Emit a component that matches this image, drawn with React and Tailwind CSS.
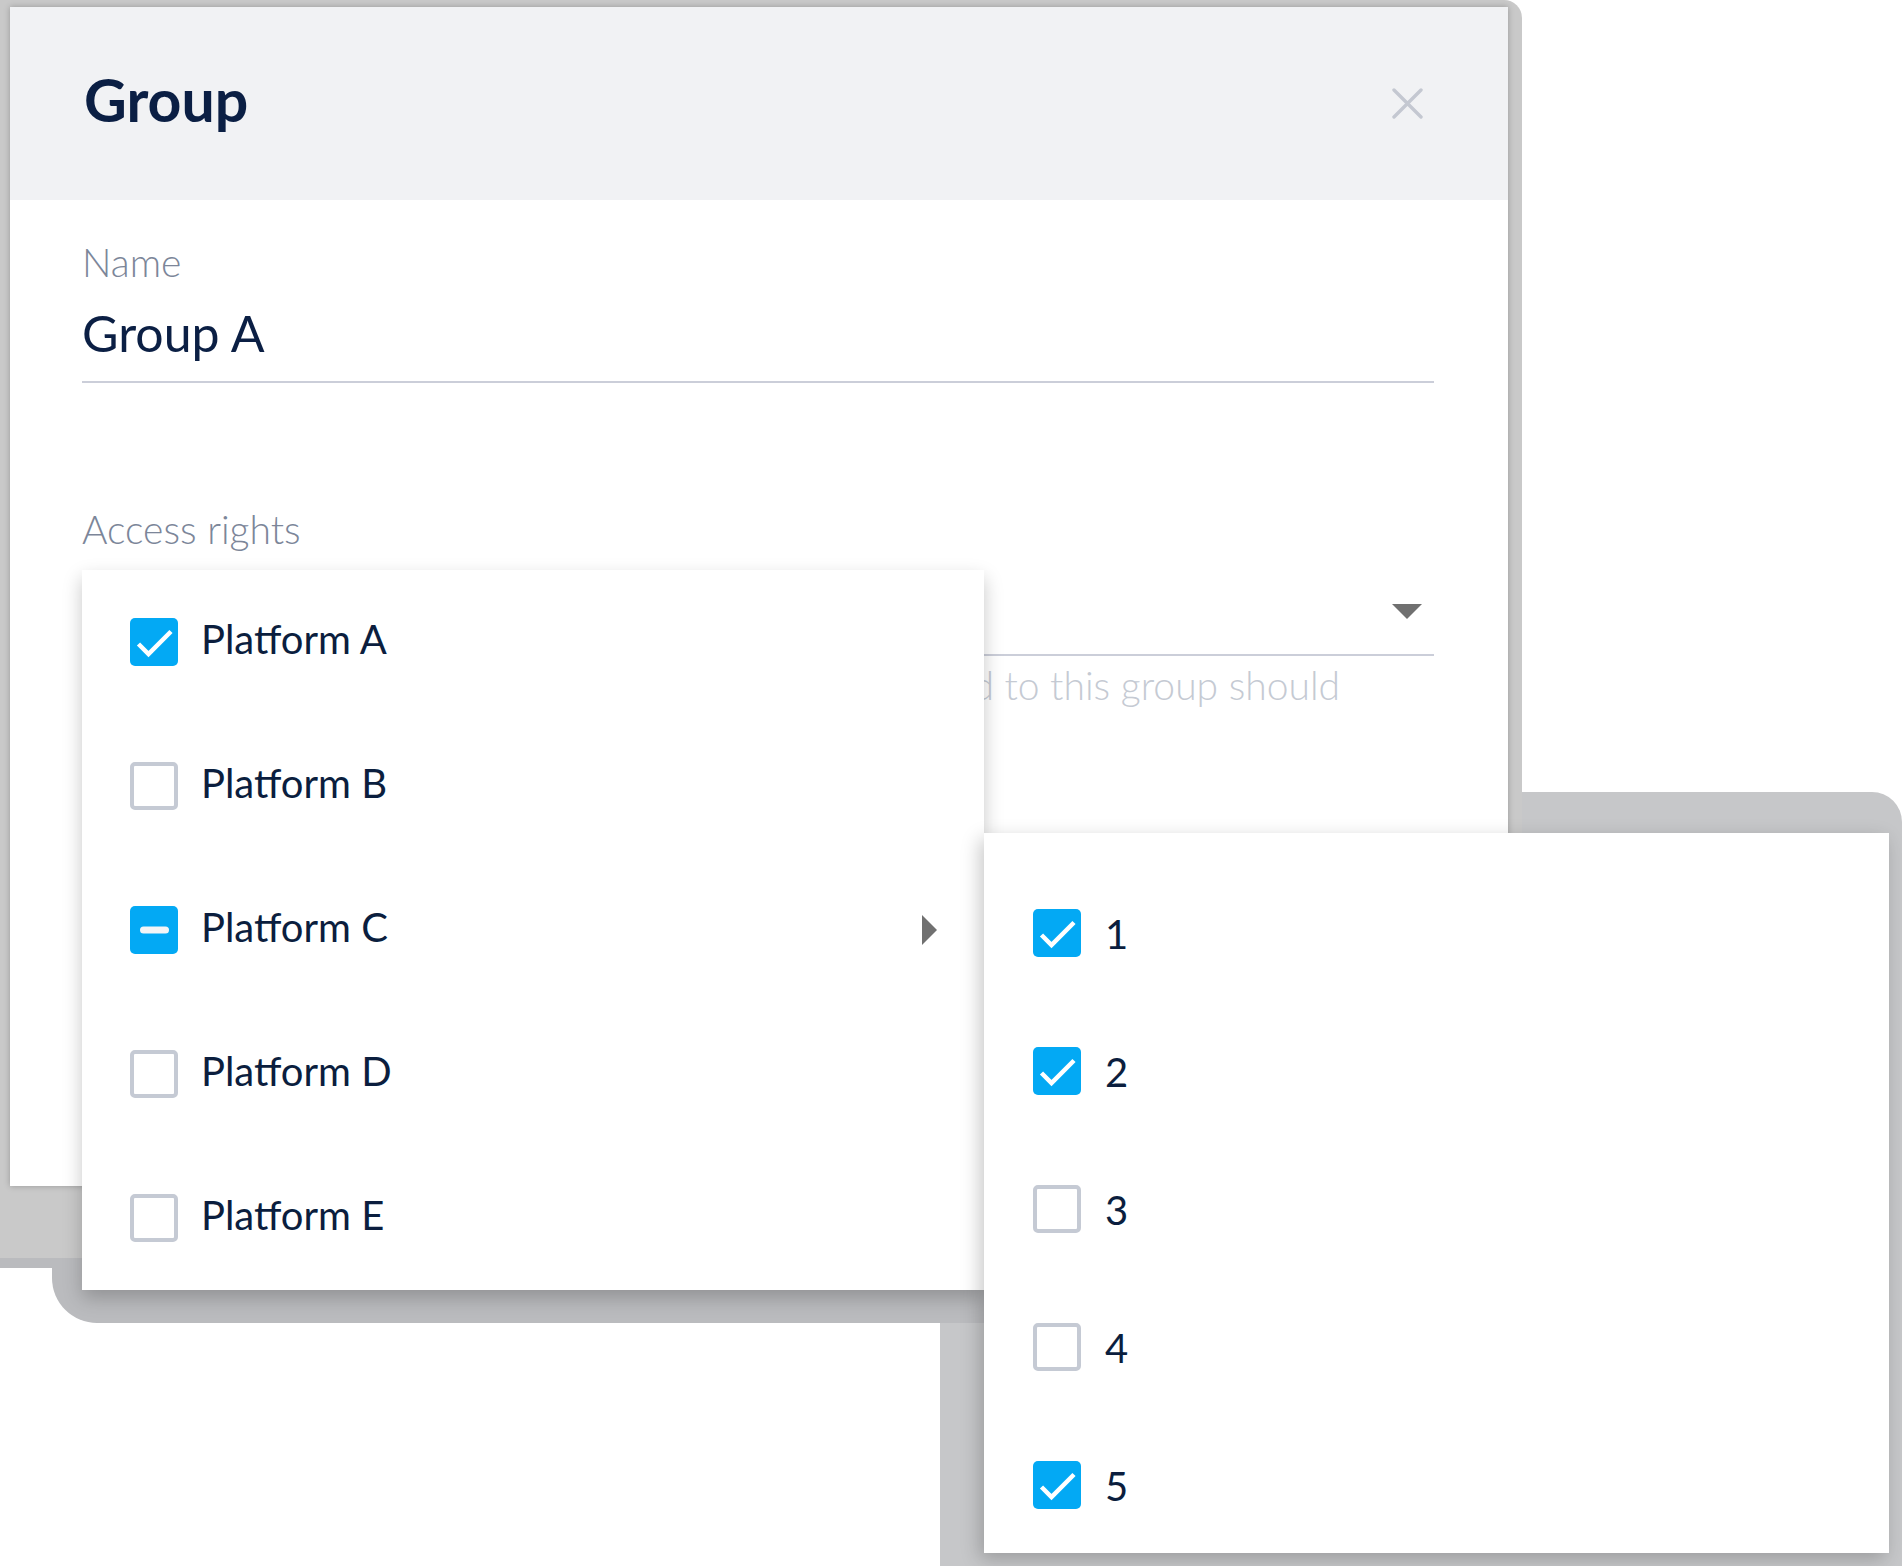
import React from "react"

const platforms = [
    { label: "Platform A", state: "checked" },
    { label: "Platform B", state: "unchecked" },
    { label: "Platform C", state: "indeterminate", hasChildren: true },
    { label: "Platform D", state: "unchecked" },
    { label: "Platform E", state: "unchecked" },
]

const sites = [
    { label: "1", state: "checked" },
    { label: "2", state: "checked" },
    { label: "3", state: "unchecked" },
    { label: "4", state: "unchecked" },
    { label: "5", state: "checked" },
]

function Checkbox({ state }) {
    if (state === "unchecked") {
        return <div className="h-[48px] w-[48px] shrink-0 rounded-[5px] border-[4px] border-[#c5cad4] bg-white" />
    }
    return (
        <div className="flex h-[48px] w-[48px] shrink-0 items-center justify-center rounded-[5px] bg-[#03a9f4]">
            {state === "checked" ? (
                <svg width="48" height="48" viewBox="0 0 48 48">
                    <path d="M8.5 26 L18.5 36 L41 13.5" fill="none" stroke="#fff" strokeWidth="4.5" />
                </svg>
            ) : (
                <svg width="48" height="48" viewBox="0 0 48 48">
                    <rect x="10" y="20.5" width="29" height="7" rx="3.5" fill="#f4f5f7" />
                </svg>
            )}
        </div>
    )
}

export default function App() {
    return (
        <div className="relative h-[1566px] w-[1902px] overflow-hidden bg-white font-['Lato',sans-serif]">
            {/* grey backdrop behind the sub menu */}
            <div className="absolute left-[940px] top-[792px] h-[820px] w-[962px] rounded-tr-[30px] rounded-bl-[44px] bg-[#c6c7c9]" />

            {/* grey backdrop + dialog */}
            <div className="relative h-[1268px] w-[1522px] rounded-tr-[18px] bg-[#c9c9c9] pl-[10px] pt-[7px]">
                <div className="h-[1179px] w-[1498px] bg-white shadow-[0_0_6px_rgba(0,0,0,0.25)]">
                    <div className="flex h-[193px] items-center justify-between bg-[#f1f2f4] pl-[74px] pr-[85px]">
                        <h1 className="-mt-[8px] text-[59px] font-bold leading-none text-[#0b1f44]">Group</h1>
                        <svg width="31" height="31" viewBox="0 0 31 31">
                            <path d="M2 2 L29 29 M29 2 L2 29" stroke="#c4c8d1" strokeWidth="3.4" strokeLinecap="round" />
                        </svg>
                    </div>
                    <div className="pl-[72px] pr-[74px]">
                        <div className="border-b-2 border-[#cbced9] pb-[23px] pt-[43px]">
                            <div className="text-[39px] font-light leading-none text-[#7c8699]">Name</div>
                            <div className="mt-[26px] text-[50px] leading-none text-[#0b1f44]">Group A</div>
                        </div>
                        <div className="mt-[127px] text-[39px] font-light leading-none text-[#7c8699]">Access rights</div>
                        <div className="flex h-[107px] items-center justify-end border-b-2 border-[#cbced9] pr-[12px] pt-[19px]">
                            <svg width="30" height="15" viewBox="0 0 30 15">
                                <polygon points="0,0 30,0 15,15" fill="#707070" />
                            </svg>
                        </div>
                        <p className="mt-[10px] w-[1258px] whitespace-nowrap text-right text-[39px] font-light leading-none text-[#c5cad3]">
                            Select the platforms that users added to this group should
                        </p>
                    </div>
                </div>
            </div>

            {/* grey band under the platform menu */}
            <div className="absolute left-0 top-[1258px] h-[10px] w-[984px] bg-[#babbbe]" />
            <div className="absolute left-[52px] top-[1258px] h-[65px] w-[932px] rounded-bl-[45px] bg-[#babbbe]" />

            {/* platform menu */}
            <div className="absolute left-[82px] top-[570px] w-[902px] bg-white shadow-[0_8px_18px_rgba(0,0,0,0.22)]">
                {platforms.map((p) => (
                    <div key={p.label} className="flex h-[144px] items-center pl-[48px] pr-[47px]">
                        <Checkbox state={p.state} />
                        <span className="mb-[6px] ml-[23px] flex-1 text-[40px] leading-none text-[#0b1e3e]">{p.label}</span>
                        {p.hasChildren && (
                            <svg width="15" height="30" viewBox="0 0 15 30">
                                <polygon points="0,0 15,15 0,30" fill="#707070" />
                            </svg>
                        )}
                    </div>
                ))}
            </div>

            {/* sub menu for Platform C */}
            <div className="absolute left-[984px] top-[833px] h-[720px] w-[905px] bg-white pt-[31px] shadow-[-4px_6px_18px_rgba(0,0,0,0.22)]">
                {sites.map((s) => (
                    <div key={s.label} className="flex h-[138px] items-center pl-[49px]">
                        <Checkbox state={s.state} />
                        <span className="mt-[2px] ml-[24px] text-[40px] leading-none text-[#0b1e3e]">{s.label}</span>
                    </div>
                ))}
            </div>
        </div>
    )
}
